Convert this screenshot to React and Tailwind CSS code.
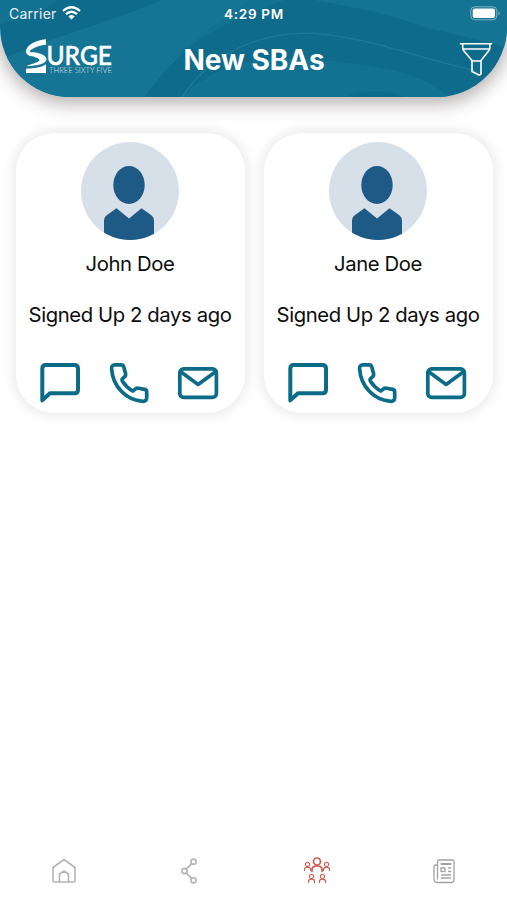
const stroke = { fill: 'none', strokeLinecap: 'round', strokeLinejoin: 'round' };

function StatusBar() {
  return (
    <div className="flex h-7 items-center justify-between pl-[9px] pr-[6px]">
      <div className="flex w-[120px] items-center gap-[5px]">
        <span className="text-[14px] leading-none tracking-[0.25px] opacity-90">Carrier</span>
        <svg className="-mt-[2px]" width="19" height="14" viewBox="0 0 19 14" fill="none" stroke="white" strokeWidth="2.3">
          <path d="M1 5 Q9.5 -2.6 18 5" />
          <path d="M4 8.2 Q9.5 3.4 15 8.2" />
          <path d="M6.4 10.4 Q9.5 7.8 12.6 10.4 L9.5 13.6Z" fill="white" stroke="none" />
        </svg>
      </div>
      <span className="-ml-[2px] text-[13.5px] font-semibold tracking-[0.7px]">4:29 PM</span>
      <div className="flex w-[120px] justify-end">
        <svg className="-mt-[2px]" width="31" height="15" viewBox="0 0 31 15">
          <rect x="0.8" y="0.8" width="26" height="13" rx="4" fill="none" stroke="white" strokeOpacity="0.45" />
          <rect x="2.7" y="2.5" width="22.3" height="9.6" rx="2" fill="white" />
          <path d="M28.6 5.2 Q31 7.3 28.6 9.4Z" fill="white" fillOpacity="0.5" />
        </svg>
      </div>
    </div>
  );
}

function Logo() {
  return (
    <svg width="92" height="42" viewBox="0 0 92 42" fill="white">
      <path d="M21 0.3 C10 1 1 7 1 12.5 C1 15 3 16.5 6 17 C4 14 4 12 8 10 C12 7.5 17 6 21 5.8Z" />
      <path d="M2.5 13.5 C9 12.2 21 14.5 21.5 20 C21.5 24.5 13 26.8 1 27.3 C6 25 12 24 14.5 21.5 C15 19 8 17.5 4 16.5Z" />
      <path d="M1 29.7 C9 29 17 28.5 21 25.2 L21 34 L1 34Z" />
      <path d="M5 11.8 C10 8.2 15 7 21 6.4" fill="none" stroke="#167595" strokeWidth="0.7" />
      <text x="21.5" y="26.3" textLength="65.5" lengthAdjust="spacingAndGlyphs" className="font-['Lato'] text-[27px] font-medium" stroke="white" strokeWidth="0.5">URGE</text>
      <text x="24" y="34" textLength="63" lengthAdjust="spacingAndGlyphs" className="font-['Lato'] text-[8.4px] font-light" fillOpacity="0.85">THREE SIXTY FIVE</text>
    </svg>
  );
}

function FunnelIcon() {
  return (
    <svg width="34" height="34" viewBox="0 0 34 34" {...stroke} stroke="white" strokeWidth="1.6">
      <path d="M1.5 1.7H32.5M3.7 2V6Q4 7.5 5 9L13 18.5V29.5L20 33Q22 33 22 31V18.5L29.5 9Q30.8 7.5 30.8 6V2" />
      <path d="M4 7H30.5M13 19H22" />
    </svg>
  );
}

function Header() {
  return (
    <header className="relative h-[97px] overflow-hidden rounded-b-[70px] bg-[#0e6b8b] text-white">
      <svg className="absolute inset-0" width="507" height="97" viewBox="0 0 507 97">
        <path d="M0 60 C45 39 99 26 162 0 H251 C215 25 177 51 145 97 H0Z" fill="#167595" />
        <path d="M251 0 C215 25 177 51 158 74 C185 46 222 22 285 0Z" fill="#137191" />
        <path d="M182 97 C218 60 270 53 339 62 C393 67 430 79 449 97 H405 C384 88 360 91 345 97Z" fill="#137292" />
        <path d="M182 97 C206 61 246 35 303 33 C361 34 412 57 477 71" fill="none" stroke="#27809b" strokeWidth="1.5" strokeOpacity=".6" />
        <path d="M315 0 C345 6 385 12 421 26 C461 37 491 41 507 49 V0Z" fill="#157493" />
        <path d="M0 0H58C41 13 20 20 0 24Z" fill="#137292" />
      </svg>
      <div className="relative">
        <StatusBar />
        <div className="flex h-16 items-center justify-between pl-[25px] pr-[14px]">
          <div className="-mt-px w-[100px]"><Logo /></div>
          <h1 className="mr-[10px] w-[142px] whitespace-nowrap text-center text-[28px] font-bold leading-none">New SBAs</h1>
          <div className="-mt-[2px] flex w-[100px] justify-end"><FunnelIcon /></div>
        </div>
      </div>
    </header>
  );
}

function Avatar() {
  return (
    <svg width="98" height="98" viewBox="0 0 98 98">
      <defs><clipPath id="disc"><circle cx="49" cy="49" r="49" /></clipPath></defs>
      <g clipPath="url(#disc)">
        <rect width="98" height="98" fill="#d7dfe9" />
        <ellipse cx="48" cy="43" rx="15.7" ry="19" fill="#1d5b86" />
        <path d="M23 98V79Q23 75 26 73L35.5 66.2L48 76.5L60.5 66.2L70 73Q73 75 73 79V98Z" fill="#1d5b86" />
      </g>
    </svg>
  );
}

function MessageIcon() {
  return (
    <svg width="42" height="42" viewBox="0 0 42 42" {...stroke} stroke="#0c6c88" strokeWidth="4">
      <path d="M3.3 38.3V6.5Q3.3 3 6.8 3H35.5Q39 3 39 6.5V27.7Q39 31.3 35.5 31.3H11Z" />
    </svg>
  );
}

function PhoneIcon() {
  return (
    <svg width="42" height="42" viewBox="0 0 42 42" {...stroke} stroke="#0c6c88" strokeWidth="3.7">
      <path d="M7 2.9H13Q15.2 2.9 15.8 5L17.6 11.8Q18 13.5 16.8 14.6L14.2 17Q13.6 18 14.4 19.2Q18.5 25.5 24.8 29L27.5 26.9Q28.8 25.9 30.4 26.2L36.6 27.4Q38.7 27.9 38.7 30V35.5Q38.7 39.5 34.8 39.3C18 38.3 4.8 24.5 3.6 6.8Q3.4 2.9 7 2.9Z" />
    </svg>
  );
}

function MailIcon() {
  return (
    <svg width="42" height="42" viewBox="0 0 42 42" {...stroke} stroke="#0c6c88" strokeWidth="3.7">
      <rect x="2.8" y="6.9" width="36.6" height="28.4" rx="3.8" />
      <path d="M4 10L21.1 22.4L38.2 10" />
    </svg>
  );
}

function MemberCard({ name, signedUp }) {
  return (
    <article className="flex h-[280px] w-[229px] flex-col items-center rounded-[38px] bg-white pt-[9px] shadow-[0_0_11px_4px_rgba(0,0,0,0.075)]">
      <Avatar />
      <h2 className="mt-[10px] text-[20.3px] leading-7 tracking-[-0.4px]">{name}</h2>
      <p className="mt-[23px] whitespace-nowrap text-[20.3px] leading-7 tracking-[-0.4px]">{signedUp}</p>
      <div className="mr-[2px] mt-[33px] flex w-[180px] justify-between">
        <MessageIcon />
        <PhoneIcon />
        <MailIcon />
      </div>
    </article>
  );
}

function Person({ x, y, s, w }) {
  return (
    <g transform={`translate(${x} ${y}) scale(${s})`} strokeWidth={w}>
      <circle cx="0" cy="4" r="3.5" />
      <path d="M-5 14V12Q-5 8.5 0 8.5Q5 8.5 5 12V14" />
    </g>
  );
}

function TabBar() {
  return (
    <nav className="grid h-[60px] grid-cols-4 items-center justify-items-center text-[#b4b4b4]">
      <svg className="ml-[2px] mt-[2px]" width="26" height="26" viewBox="0 0 26 26" {...stroke} stroke="currentColor" strokeWidth="1.6">
        <path d="M2 9.5L13 1.5L24 9.5V22.5Q24 24 22.5 24H3.5Q2 24 2 22.5ZM8.5 24V16L13 13L17.5 16V24" />
      </svg>
      <svg className="mt-px" width="26" height="26" viewBox="0 0 26 26" {...stroke} stroke="currentColor" strokeWidth="1.6">
        <circle cx="7.5" cy="13" r="2.6" /><circle cx="16.5" cy="3.7" r="2.6" /><circle cx="16.5" cy="22.3" r="2.6" />
        <path d="M9.4 11L14.6 5.6M9.4 15L14.6 20.4" />
      </svg>
      <svg className="mt-[2px]" width="28" height="28" viewBox="0 0 28 28" {...stroke} stroke="#cf5b50">
        <Person x={14} y={0.5} s={1} w={1.7} />
        <Person x={4.5} y={5} s={0.6} w={1.9} />
        <Person x={23.5} y={5} s={0.6} w={1.9} />
        <Person x={8.5} y={17} s={0.6} w={1.9} />
        <Person x={19.5} y={17} s={0.6} w={1.9} />
      </svg>
      <svg className="mt-px" width="26" height="26" viewBox="0 0 26 26" {...stroke} stroke="#a3a3a3" strokeWidth="1.3">
        <path d="M6 7H4.5Q3 7 3 8.5V21Q3 24.5 6.5 24.5H20.5Q23 24.5 23 22V3.5Q23 2 21.5 2H8Q6.5 2 6.5 3.5V21" />
        <path d="M10.5 6H19.5" strokeWidth="2.2" />
        <rect x="10" y="10" width="4" height="3.5" />
        <path d="M17.5 10H19.5M17.5 13.5H19.5M10.5 17H19.5M10.5 20H19.5" />
      </svg>
    </nav>
  );
}

export default function App() {
  return (
    <div className="flex h-[900px] w-[507px] flex-col overflow-hidden bg-white font-['Inter',sans-serif] text-[#0c0c0c]">
      <div className="rounded-b-[70px] shadow-[0_5px_18px_2px_rgba(40,30,25,0.34)]"><Header /></div>
      <main className="flex flex-1 items-start gap-[19px] pl-[15.5px] pt-9">
        <MemberCard name="John Doe" signedUp="Signed Up 2 days ago" />
        <MemberCard name="Jane Doe" signedUp="Signed Up 2 days ago" />
      </main>
      <TabBar />
    </div>
  );
}
